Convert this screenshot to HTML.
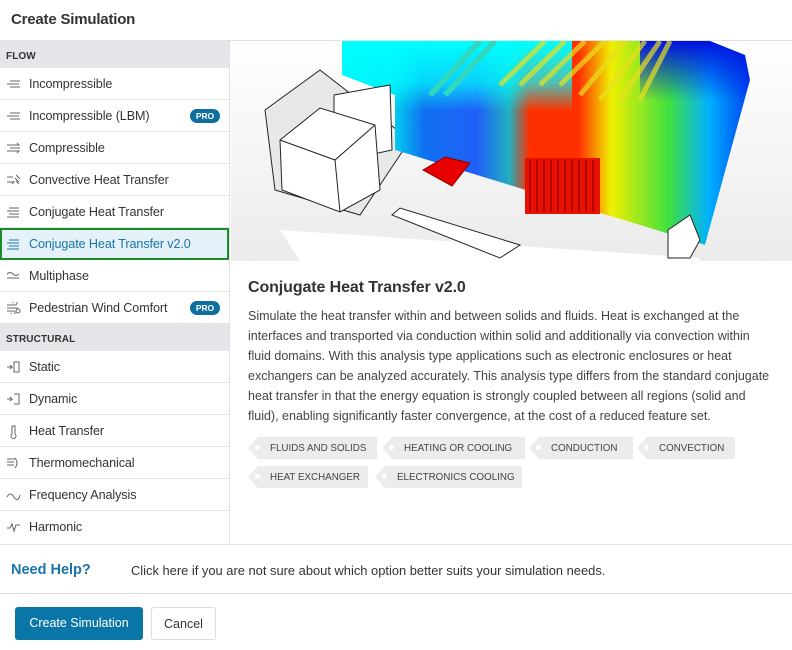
<!DOCTYPE html>
<html><head><meta charset="utf-8"><style>
*{box-sizing:border-box;margin:0;padding:0}
body{width:792px;height:650px;overflow:hidden;background:#fff;font-family:"Liberation Sans",sans-serif;color:#333;position:relative}
.hdr{position:absolute;left:0;top:0;width:792px;height:41px;border-bottom:1px solid #e2e2e2}
.hdr span{position:absolute;left:11px;top:11px;font-size:15px;font-weight:bold;color:#333;letter-spacing:-0.2px}
.left{position:absolute;left:0;top:41px;width:230px;height:504px;border-right:1px solid #e0e0e0}
.sec{height:27px;background:#e4e6e9;font-size:10px;font-weight:bold;color:#333;padding:10px 0 0 6px;letter-spacing:0.1px}
.it{height:32px;border-bottom:1px solid #e6e6e6;position:relative;font-size:12.6px;color:#333;padding:9px 0 0 29px;white-space:nowrap;letter-spacing:-0.1px}
.it svg{position:absolute;left:6px;top:10px}
.it.sel{border:2px solid #1a8a2a;background:#e4f1f8;color:#1a75a8;padding:7px 0 0 27px}
.it.sel svg{left:4px;top:8px}
.pro{position:absolute;right:9px;top:9px;background:#0f6fa0;color:#fff;font-size:8.5px;font-weight:bold;border-radius:8px;padding:2px 6px;height:14px}
.right{position:absolute;left:231px;top:41px;width:561px;height:504px}
h2{position:absolute;left:248px;top:279px;font-size:16px;font-weight:bold;color:#333;letter-spacing:-0.1px}
.desc{position:absolute;left:248px;top:306px;font-size:12.5px;line-height:20px;color:#444;white-space:nowrap}
.tag{position:absolute;height:22px;background:#ececec;font-size:9.8px;color:#444;padding:6px 8px 0 12px;white-space:nowrap}
.tag:before{content:"";position:absolute;left:-10px;top:0;border-right:10px solid #ececec;border-top:11px solid transparent;border-bottom:11px solid transparent}
.tag:after{content:"";position:absolute;left:-3px;top:8px;width:5px;height:5px;border-radius:50%;background:#fff}
.foot1{position:absolute;left:0;top:544px;width:792px;height:50px;border-top:1px solid #e2e2e2;border-bottom:1px solid #e2e2e2}
.nh{position:absolute;left:11px;top:17px;font-size:14.5px;font-weight:bold;color:#1a75a8}
.ct{position:absolute;left:131px;top:18px;font-size:12.9px;color:#333}
.btn{position:absolute;top:607px;height:33px;border-radius:3px;font-size:12.5px;padding-top:9px;text-align:center}
</style></head><body>
<div class="hdr"><span>Create Simulation</span></div>
<div class="left">
<div class="sec">FLOW</div>
<div class="it"><svg width="16" height="12" stroke="#666" fill="none" stroke-width="1"><path d="M4 3h10M1 6h12M4 9h10"/></svg>Incompressible</div>
<div class="it"><svg width="16" height="12" stroke="#666" fill="none" stroke-width="1"><path d="M4 3h10M1 6h12M4 9h10"/></svg>Incompressible (LBM)<span class="pro">PRO</span></div>
<div class="it"><svg width="16" height="12" stroke="#666" fill="none" stroke-width="1"><path d="M1 3h12l-2-2M4 6h10M1 9h12l-2 2"/></svg>Compressible</div>
<div class="it"><svg width="16" height="12" stroke="#666" fill="none" stroke-width="1"><path d="M1 3h6M1 8h7l-2 2M10 1l4 4M9 4l4 4M10 7l3 3"/></svg>Convective Heat Transfer</div>
<div class="it"><svg width="16" height="12" stroke="#666" fill="none" stroke-width="1"><path d="M3 2h10M1 5h12M3 8h10M1 11h12"/></svg>Conjugate Heat Transfer</div>
<div class="it sel"><svg width="16" height="12" stroke="#1a75a8" fill="none" stroke-width="1"><path d="M3 2h10M1 5h12M3 8h10M1 11h12"/></svg>Conjugate Heat Transfer v2.0</div>
<div class="it"><svg width="16" height="12" stroke="#666" fill="none" stroke-width="1"><path d="M1 4q3-3 6 0t6 0M1 8h12"/></svg>Multiphase</div>
<div class="it"><svg width="16" height="12" stroke="#666" fill="none" stroke-width="1"><path d="M1 3h8a2 2 0 1 0-2-2M1 6h11M1 9h6a2 2 0 1 1-2 2"/><circle cx="12" cy="9" r="2"/></svg>Pedestrian Wind Comfort<span class="pro">PRO</span></div>
<div class="sec">STRUCTURAL</div>
<div class="it"><svg width="16" height="12" stroke="#666" fill="none" stroke-width="1"><path d="M1 6h5l-2-2M4 8l2-2"/><rect x="8" y="1" width="5" height="10"/></svg>Static</div>
<div class="it"><svg width="16" height="12" stroke="#666" fill="none" stroke-width="1"><path d="M1 6h5l-2-2M4 8l2-2M8 1h5v10H8"/></svg>Dynamic</div>
<div class="it"><svg width="16" height="14" stroke="#666" fill="none" stroke-width="1"><path d="M6 1h3v8a2.5 2.5 0 1 1-3 0z"/></svg>Heat Transfer</div>
<div class="it"><svg width="16" height="12" stroke="#666" fill="none" stroke-width="1"><path d="M1 2h8M1 5h7M1 8h7M9 1q4 5 0 10"/></svg>Thermomechanical</div>
<div class="it"><svg width="16" height="12" stroke="#666" fill="none" stroke-width="1"><path d="M1 8q3-6 7 0t6-2"/></svg>Frequency Analysis</div>
<div class="it" style="border-bottom:none"><svg width="16" height="12" stroke="#666" fill="none" stroke-width="1"><path d="M1 7h3l2-4 2 7 2-6h4"/></svg>Harmonic</div>
</div>
<div class="right">
<svg width="561" height="220" viewBox="231 41 561 220">
<defs>
<linearGradient id="bg" x1="0" y1="0" x2="0" y2="1"><stop offset="0" stop-color="#fff"/><stop offset="1" stop-color="#ebebeb"/></linearGradient>
<linearGradient id="fl" x1="0" y1="0" x2="1" y2="0">
<stop offset="0" stop-color="#00e8f0"/><stop offset="0.12" stop-color="#00d8f0"/><stop offset="0.2" stop-color="#1070f0"/><stop offset="0.33" stop-color="#2060f8"/><stop offset="0.41" stop-color="#20b0c0"/><stop offset="0.46" stop-color="#ff3000"/><stop offset="0.58" stop-color="#ff3000"/><stop offset="0.66" stop-color="#f0f000"/><stop offset="0.8" stop-color="#40e040"/><stop offset="0.9" stop-color="#00b0ff"/><stop offset="1" stop-color="#0040f0"/></linearGradient>
<linearGradient id="tp" x1="0" y1="0" x2="0" y2="1"><stop offset="0" stop-color="#00ffff"/><stop offset="0.6" stop-color="#00ffff" stop-opacity="0.7"/><stop offset="1" stop-color="#00ffff" stop-opacity="0"/></linearGradient>
<linearGradient id="tr" x1="0" y1="0" x2="0" y2="1"><stop offset="0" stop-color="#0010e0"/><stop offset="1" stop-color="#0010e0" stop-opacity="0"/></linearGradient>
<clipPath id="cp"><polygon points="342,41 710,41 745,55 750,80 705,245 395,150 395,95 342,75"/></clipPath>
</defs>
<rect x="231" y="41" width="561" height="220" fill="url(#bg)"/>
<polygon points="265,110 320,70 410,140 360,215 275,190" fill="#e8e8e8" stroke="#222"/>
<polygon points="280,230 700,258 700,261 300,261" fill="#fff"/>
<g clip-path="url(#cp)">
<polygon points="342,41 710,41 745,55 750,80 705,245 395,150 395,95 342,75" fill="url(#fl)"/>
<rect x="342" y="41" width="230" height="70" fill="url(#tp)"/>
<rect x="640" y="41" width="120" height="60" fill="url(#tr)"/>
<path d="M430 95L480 41M445 95L495 41" stroke="#30d8c0" stroke-width="6"/>
<path d="M500 85l45-44M520 85l45-44M540 85l45-44M560 85l45-44M580 95l45-54M600 100l45-59M620 100l40-59M640 100l30-59" stroke="#e8e020" stroke-width="5" opacity="0.7"/>
</g>
<polygon points="334,95 390,85 392,150 355,158 334,150" fill="#fff" stroke="#222"/>
<polygon points="280,140 320,108 375,125 380,190 340,212 282,190" fill="#fff" stroke="#222"/>
<path d="M280 140l55 20 40-35M335 160l5 52" stroke="#222" fill="none"/>
<polygon points="423,170 445,157 470,163 452,186" fill="#e80000" stroke="#800"/>
<rect x="525" y="158" width="75" height="56" fill="#e81000"/>
<path d="M530 160v52M537 160v52M544 160v52M551 160v52M558 160v52M565 160v52M572 160v52M579 160v52M586 160v52M593 160v52" stroke="#700" stroke-width="1"/>
<polygon points="392,215 400,208 520,245 500,258" fill="#fff" stroke="#222"/>
<polygon points="668,230 690,215 700,240 690,258 668,258" fill="#fff" stroke="#222"/>
</svg>
</div>
<h2>Conjugate Heat Transfer v2.0</h2>
<div class="desc">Simulate the heat transfer within and between solids and fluids. Heat is exchanged at the<br>interfaces and transported via conduction within solid and additionally via convection within<br>fluid domains. With this analysis type applications such as electronic enclosures or heat<br>exchangers can be analyzed accurately. This analysis type differs from the standard conjugate<br>heat transfer in that the energy equation is strongly coupled between all regions (solid and<br>fluid), enabling significantly faster convergence, at the cost of a reduced feature set.</div>
<div class="tag" style="left:258px;top:437px;width:119px">FLUIDS AND SOLIDS</div>
<div class="tag" style="left:392px;top:437px;width:133px">HEATING OR COOLING</div>
<div class="tag" style="left:539px;top:437px;width:94px">CONDUCTION</div>
<div class="tag" style="left:647px;top:437px;width:88px">CONVECTION</div>
<div class="tag" style="left:258px;top:466px;width:110px">HEAT EXCHANGER</div>
<div class="tag" style="left:385px;top:466px;width:137px">ELECTRONICS COOLING</div>
<div class="foot1"><span class="nh">Need Help?</span><span class="ct">Click here if you are not sure about which option better suits your simulation needs.</span></div>
<div class="btn" style="left:15px;width:128px;background:#0a76a8;color:#fff">Create Simulation</div>
<div class="btn" style="left:151px;width:65px;border:1px solid #ddd;color:#333">Cancel</div>
</body></html>
